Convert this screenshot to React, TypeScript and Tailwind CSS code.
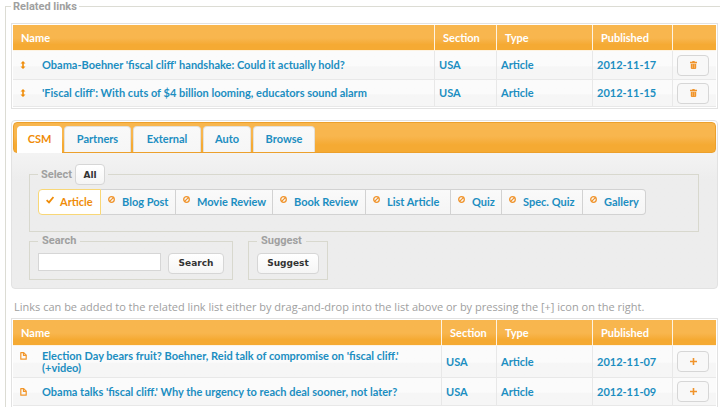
import React from "react";

type Row = { name: string; section: string; type: string; published: string };

const related: Row[] = [
  { name: "Obama-Boehner 'fiscal cliff' handshake: Could it actually hold?", section: "USA", type: "Article", published: "2012-11-17" },
  { name: "'Fiscal cliff': With cuts of $4 billion looming, educators sound alarm", section: "USA", type: "Article", published: "2012-11-15" },
];

const candidates: Row[] = [
  { name: "Election Day bears fruit? Boehner, Reid talk of compromise on 'fiscal cliff.' (+video)", section: "USA", type: "Article", published: "2012-11-07" },
  { name: "Obama talks 'fiscal cliff.' Why the urgency to reach deal sooner, not later?", section: "USA", type: "Article", published: "2012-11-09" },
];

const tabs = [
  { label: "CSM", width: "w-[45px]" },
  { label: "Partners", width: "w-[67px]" },
  { label: "External", width: "w-[68px]" },
  { label: "Auto", width: "w-[48px]" },
  { label: "Browse", width: "w-[62px]" },
];

const kinds = [
  { label: "Article", width: "w-[63px]" },
  { label: "Blog Post", width: "w-[75px]" },
  { label: "Movie Review", width: "w-[97px]" },
  { label: "Book Review", width: "w-[93px]" },
  { label: "List Article", width: "w-[85px]" },
  { label: "Quiz", width: "w-[51px]" },
  { label: "Spec. Quiz", width: "w-[81px]" },
  { label: "Gallery", width: "w-[63px]" },
];

function SortIcon() {
  return (
    <svg width="6" height="8" viewBox="0 0 6 8" fill="#ef8c08" aria-hidden="true">
      <path d="M3 0 5.500 2.500H3.800v3h1.700L3 8 .5 5.500h1.700v-3H.5z" />
    </svg>
  );
}

function DocIcon() {
  return (
    <svg width="7" height="8" viewBox="0 0 7 8" fill="none" stroke="#f2962a" strokeWidth="1.2" strokeLinejoin="round" aria-hidden="true">
      <path d="M.8.700h2.900L6.200 3.200v4H.8z" />
      <path d="M3.500.700v2.700h2.700" />
    </svg>
  );
}

function TrashIcon() {
  return (
    <svg width="7" height="8" viewBox="0 0 7 8" fill="#f0932a" aria-hidden="true">
      <path d="M2.300 0h2.400v.8H7v1.400H0V.8h2.300z" />
      <path d="M.8 2.700h5.400v4.600l-.7.7h-4l-.7-.7z" />
      <path d="M2.500 3.200v4M4.500 3.200v4" stroke="#f9cf98" strokeWidth="0.500" />
    </svg>
  );
}

function PlusIcon() {
  return (
    <svg width="7" height="7" viewBox="0 0 7 7" fill="#f0932a" aria-hidden="true">
      <path d="M2.700 0h1.600v2.700H7v1.600H4.300V7H2.700V4.300H0V2.700h2.700z" />
    </svg>
  );
}

function CheckIcon() {
  return (
    <svg width="8" height="8" viewBox="0 0 8 8" fill="none" stroke="#ef8c08" strokeWidth="1.8" aria-hidden="true">
      <path d="M.6 4.200 3 6.400 7.500 1" />
    </svg>
  );
}

function BanIcon() {
  return (
    <svg width="7" height="7" viewBox="0 0 7 7" fill="none" stroke="#f0932a" strokeWidth="1.3" aria-hidden="true">
      <circle cx="3.500" cy="3.500" r="2.800" />
      <path d="M1.600 5.400 5.400 1.600" />
    </svg>
  );
}

function LinkTable({ rows, rowIcon, action, actionLabel, sectionWidth, heights }: {
  rows: Row[];
  rowIcon: React.ReactNode;
  action: React.ReactNode;
  actionLabel: string;
  sectionWidth: string;
  heights: string[];
}) {
  const th = "border-b border-l border-[#fdf3e3] px-2 text-left font-bold";
  const td = "border-b border-l border-[#e8e8e8] px-1";
  return (
    <div className="border border-[#e2e2e2] bg-white p-px">
      <table className="w-full table-fixed border-separate border-spacing-0 text-[11px] leading-3 font-bold">
        <colgroup>
          <col />
          <col className={sectionWidth} />
          <col className="w-24" />
          <col className="w-20" />
          <col className="w-11" />
        </colgroup>
        <thead>
          <tr className="h-[26px] bg-linear-to-b from-[#f8b64e] from-50% to-[#f5aa33] to-75% text-white">
            <th className="border-b border-[#fdf3e3] px-2 text-left font-bold">Name</th>
            <th className={th}>Section</th>
            <th className={th}>Type</th>
            <th className={th}>Published</th>
            <th className={th} aria-label="Actions" />
          </tr>
        </thead>
        <tbody className="text-[#1c8ec1]">
          {rows.map((row, i) => (
            <tr key={row.name} className={`${heights[i]} bg-linear-to-b from-[#fbfbfb] from-50% to-[#f6f6f6] to-55%`}>
              <td className="border-b border-[#e8e8e8] pl-[7px] pr-3">
                <div className="flex items-start">
                  <span className="flex h-3 w-[22px] shrink-0 items-center">{rowIcon}</span>
                  <a href="#">{row.name}</a>
                </div>
              </td>
              <td className={td}>{row.section}</td>
              <td className={td}>{row.type}</td>
              <td className={td}>{row.published}</td>
              <td className={td}>
                <button aria-label={actionLabel} className="flex h-[21px] w-8 items-center justify-center rounded border border-[#d6d6d6] bg-[#f8f8f8]">
                  {action}
                </button>
              </td>
            </tr>
          ))}
        </tbody>
      </table>
    </div>
  );
}

const legend = "px-1 font-[Roboto,sans-serif] text-[11px] font-bold leading-3 text-[#a0a0a0]";
const box = "border border-[#d8d8ce]";
const button = "h-[21px] rounded border border-[#d6d6d6] bg-linear-to-b from-white to-[#f5f5f5] font-[DejaVu_Sans,sans-serif] text-[9px] font-bold text-[#333]";

export default function App() {
  return (
    <div className="min-h-screen bg-white pl-[5px] font-[Lato,sans-serif]">
      <fieldset className="min-h-screen min-w-0 border-l border-t border-[#dcdcd4] pl-[5px] pr-0.5">
        <legend className="px-0.5 font-[Roboto,sans-serif] text-[11px] font-bold leading-[13px] text-[#a0a0a0]">Related links</legend>
        <div className="pt-2.5">
          <LinkTable rows={related} rowIcon={<SortIcon />} action={<TrashIcon />} actionLabel="Remove link" sectionWidth="w-[62px]" heights={["h-[29px]", "h-[27px]"]} />
        </div>

        <section className="mt-[11px] rounded border border-[#e2e2e2] bg-linear-to-b from-white from-5% via-[#f3f3f3] via-20% to-[#ededed] to-35% pb-2">
          <div role="tablist" className="mx-px mt-px flex h-[31px] items-end gap-0.5 rounded border border-[#eca02c] bg-linear-to-b from-[#f8b64e] from-45% to-[#f5aa33] to-75% pl-[3px]">
            {tabs.map((tab, i) => (
              <button
                key={tab.label}
                role="tab"
                aria-selected={i === 0}
                className={`${tab.width} ${i === 0 ? "-mb-px h-[27px] border-white bg-white pb-px text-[#ef8c08]" : "h-[26px] border-[#e4e0d8] bg-linear-to-b from-[#f9f9f9] to-[#f6f6f6] text-[#1c8ec1]"} rounded-t border border-b-0 text-[11px] font-bold`}
              >
                {tab.label}
              </button>
            ))}
          </div>

          <div className="pl-[17px] pr-[18px] pt-[11px]">
            <fieldset className={`${box} h-[68px] min-w-0 px-2`}>
              <legend className="flex items-center gap-[3px] px-[3px] font-[Roboto,sans-serif] text-[11px] font-bold leading-3 text-[#a0a0a0]">
                Select
                <button className={`${button} w-[30px]`}>All</button>
              </legend>
              <div className="mt-1 flex">
                {kinds.map((kind, i) => (
                  <button
                    key={kind.label}
                    aria-pressed={i === 0}
                    className={`${kind.width} ${i === 0 ? "gap-1.5 rounded-l border border-[#f8d777] bg-white text-[#ef8c08]" : "gap-[7px] border-y border-r border-[#d2d2d2] bg-linear-to-b from-[#fafafa] to-[#f5f5f5] text-[#1c8ec1] last:rounded-r"} flex h-[26px] items-center whitespace-nowrap pl-[7px] text-[11px] font-bold leading-3`}
                  >
                    <span className="flex h-3 items-start">{i === 0 ? <CheckIcon /> : <BanIcon />}</span>
                    {kind.label}
                  </button>
                ))}
              </div>
            </fieldset>

            <div className="mt-[3px] flex gap-[15px]">
              <fieldset className={`${box} h-[45px] w-[204px] min-w-0 px-2`}>
                <legend className={legend}>
                  <label htmlFor="search">Search</label>
                </legend>
                <div className="mt-1.5 flex items-start gap-[7px]">
                  <input id="search" type="text" className="h-[18px] min-w-0 flex-1 border border-[#d6d6d6] bg-white px-1 text-[11px]" />
                  <button className={`${button} w-14`}>Search</button>
                </div>
              </fieldset>
              <fieldset className={`${box} h-[45px] w-20 min-w-0 px-2`}>
                <legend className={legend}>Suggest</legend>
                <button className={`${button} mt-1.5 block w-[62px]`}>Suggest</button>
              </fieldset>
            </div>
          </div>
        </section>

        <p className="pb-[5px] pl-[3px] pt-3 font-[Open_Sans,sans-serif] text-[11px] leading-3 text-[#a0a0a0]">
          Links can be added to the related link list either by drag-and-drop into the list above or by pressing the [+] icon on the right.
        </p>

        <LinkTable rows={candidates} rowIcon={<DocIcon />} action={<PlusIcon />} actionLabel="Add link" sectionWidth="w-[55px]" heights={["h-8", "h-7"]} />
      </fieldset>
    </div>
  );
}
